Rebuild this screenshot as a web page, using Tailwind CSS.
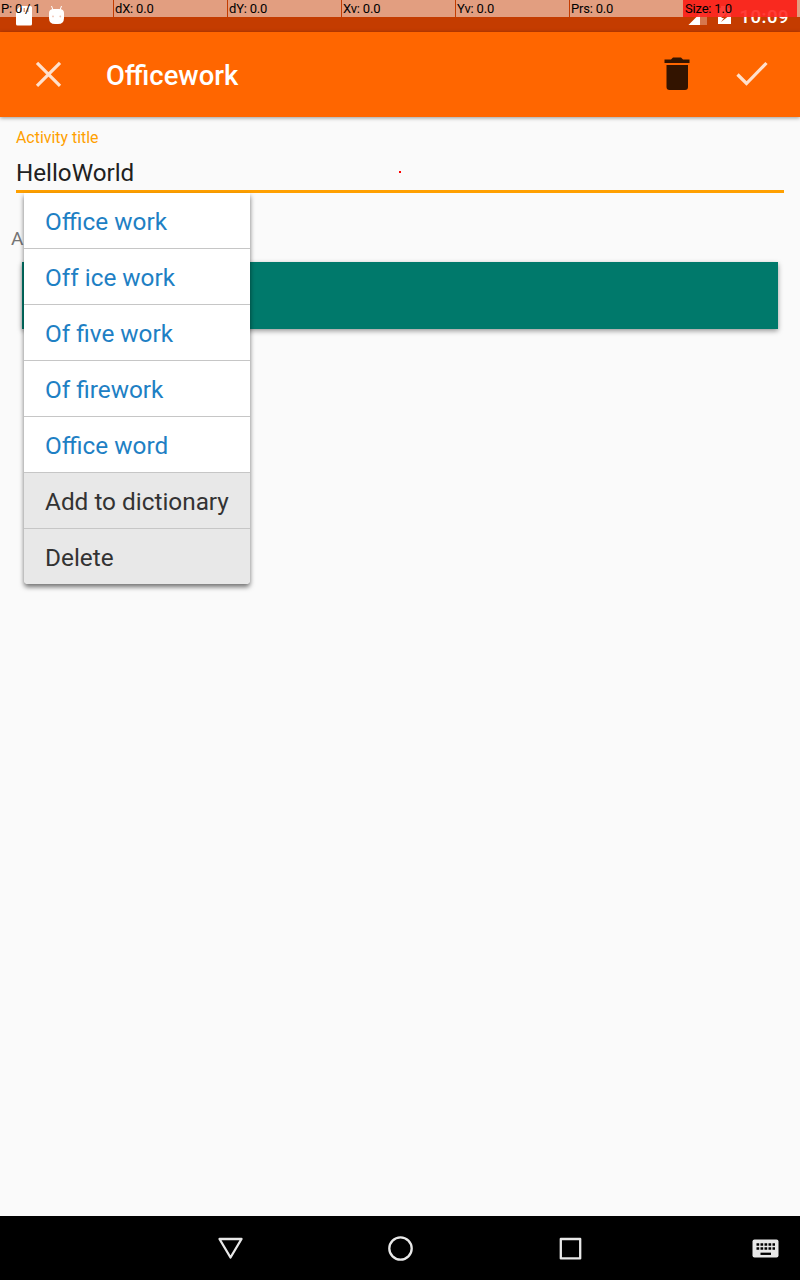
<!DOCTYPE html>
<html lang="en"><head><meta charset="utf-8"><title>Officework</title>
<script src="https://cdn.jsdelivr.net/npm/@tailwindcss/browser@4"></script></head>
<body class="font-['Roboto',sans-serif]">
<div class="relative flex h-[1280px] w-[800px] flex-col overflow-hidden bg-[#fafafa]">
  <!-- Status bar -->
  <div class="relative h-8 shrink-0 bg-[#c43c00]">
    <div class="flex h-8 items-center justify-between">
      <svg class="h-8 w-20" viewBox="0 0 80 32" fill="#fff"><path d="M20.500 6H30.500Q32 6 32 7.500V24Q32 25.500 30.500 25.500H17.500Q16 25.500 16 24V10.500ZM20 8V12H21.500V8ZM23.500 8V12H25V8ZM27 8V12H28.500V8Z" fill-rule="evenodd"/><path d="M49 13H64V18Q64 24 58 24H55Q49 24 49 18Z"/><path d="M49 13Q49 9 54 9H59Q64 9 64 13Z"/><path d="M51.500 6L53 10M61.500 6L60 10" stroke="#fff" stroke-width="1"/><circle cx="53" cy="16.300" r=".9" fill="#e08060"/><circle cx="60.300" cy="16.300" r=".9" fill="#e08060"/></svg>
      <div class="flex h-8 items-center pr-[11px]">
        <svg class="h-8 w-[60px]" viewBox="680 0 60 32" fill="#fff"><path d="M688.500 25L707 6.500V25Z" opacity=".3"/><path d="M688.500 25L700 13.500V25Z"/><path d="M718 8H721V6H728V8H731V24H718ZM728 12L721 18H724L721 22L728 16.500H725Z" fill-rule="evenodd"/></svg>
        <span class="pt-px text-[18.700px] leading-8 font-medium tracking-[0.4px] text-white">10:09</span>
      </div>
    </div>
    <!-- Pointer readout -->
    <div class="absolute inset-x-0 top-0 flex h-[17px] text-[13px] leading-[17px] tracking-[-0.2px] text-black">
      <div class="mr-px w-[113px] bg-white/50 pl-px">P: 0 / 1</div>
      <div class="mr-px w-[113px] bg-white/50 pl-px">dX: 0.0</div>
      <div class="mr-px w-[113px] bg-white/50 pl-px">dY: 0.0</div>
      <div class="mr-px w-[113px] bg-white/50 pl-px">Xv: 0.0</div>
      <div class="mr-px w-[113px] bg-white/50 pl-px">Yv: 0.0</div>
      <div class="w-[113px] bg-white/50 pl-px">Prs: 0.0</div>
      <div class="w-[114px] bg-[#ff2722]/90 pl-[2px]">Size: 1.0</div>
      <div class="flex-1 bg-white/50"></div>
    </div>
  </div>
  <!-- App bar -->
  <header class="relative flex h-[85px] shrink-0 items-center bg-[#ff6600] shadow-[0_1px_4px_rgba(0,0,0,0.4)]">
    <svg class="ml-8 size-8" viewBox="0 0 32 32" fill="none" stroke="#ffe0cc" stroke-width="3.200"><path d="M5 3.800L28 26.800M28 3.800L5 26.800"/></svg>
    <h1 class="ml-[42px] pt-[2px] text-[27.400px] leading-8 font-medium text-white">Officework</h1>
    <svg class="mr-[46px] mb-[2px] ml-auto h-[34px] w-[26px]" viewBox="0 0 26 34" fill="#331400"><path d="M.5 2.500H7L9 .5H17L19 2.500H25.500V6H.5ZM2.500 8H24V30Q24 33 21 33H5.500Q2.500 33 2.500 30Z"/></svg>
    <svg class="mr-8 h-8 w-8" viewBox="0 0 32 32" fill="none" stroke="#ffe0cc" stroke-width="3.200"><path d="M1.500 15.500L10.500 24.500L30.500 4"/></svg>
  </header>
  <main class="relative flex-1">
    <div class="mx-4 flex h-[76px] flex-col border-b-[3px] border-[#ffa000] pt-[11px]">
      <label class="text-[15.900px] leading-5 text-[#ffa000]">Activity title</label>
      <div class="mt-[9px] text-[24.200px] leading-8 text-[#212121]">HelloWorld</div>
    </div>
    <div class="mt-9 ml-[11px] text-[19px] leading-[20px] text-[#757575]">A</div>
    <div class="mx-[22px] mt-[13px] h-[67px] bg-[#00796b] shadow-[0_2px_5px_rgba(0,0,0,0.4)]"></div>
    <span class="absolute top-[54px] left-[399px] size-[2px] bg-[#f00]"></span>
    <!-- Suggestion menu -->
    <ul class="absolute top-[76px] left-6 w-[226px] divide-y divide-[#c6c6c6] rounded-b-[4px] text-[24.350px] shadow-[0_3px_5px_rgba(0,0,0,0.55)]">
      <li class="h-14 bg-white pl-[21px] leading-[58px] text-[#1e80c4]">Office work</li>
      <li class="h-14 bg-white pl-[21px] leading-[58px] text-[#1e80c4]">Off ice work</li>
      <li class="h-14 bg-white pl-[21px] leading-[58px] text-[#1e80c4]">Of five work</li>
      <li class="h-14 bg-white pl-[21px] leading-[58px] text-[#1e80c4]">Of firework</li>
      <li class="h-14 bg-white pl-[21px] leading-[58px] text-[#1e80c4]">Office word</li>
      <li class="h-14 bg-[#e8e8e8] pl-[21px] leading-[58px] text-[#333]">Add to dictionary</li>
      <li class="h-[55px] rounded-b-[4px] bg-[#e8e8e8] pl-[21px] leading-[58px] text-[#333]">Delete</li>
    </ul>
  </main>
  <!-- Navigation bar -->
  <nav class="relative h-16 shrink-0 bg-black">
    <svg class="h-16 w-full" viewBox="0 0 800 64" fill="none" stroke="#e8e8e8" stroke-width="2.300" stroke-linejoin="round"><path d="M219.500 23H241.500L230.500 41.500Z"/><circle cx="400.500" cy="32.500" r="11.200"/><path d="M560.800 23H580.200V42.400H560.800Z"/><rect x="752.500" y="23.500" width="26" height="18" rx="2" fill="#e8e8e8" stroke="none"/><path d="M756.500 28.500H775M756.500 32.500H775" stroke="#000" stroke-width="2.500" stroke-dasharray="2.700 1.300"/><path d="M760.500 37.800H771" stroke="#000" stroke-linejoin="miter"/></svg>
  </nav>
</div>
</body></html>
